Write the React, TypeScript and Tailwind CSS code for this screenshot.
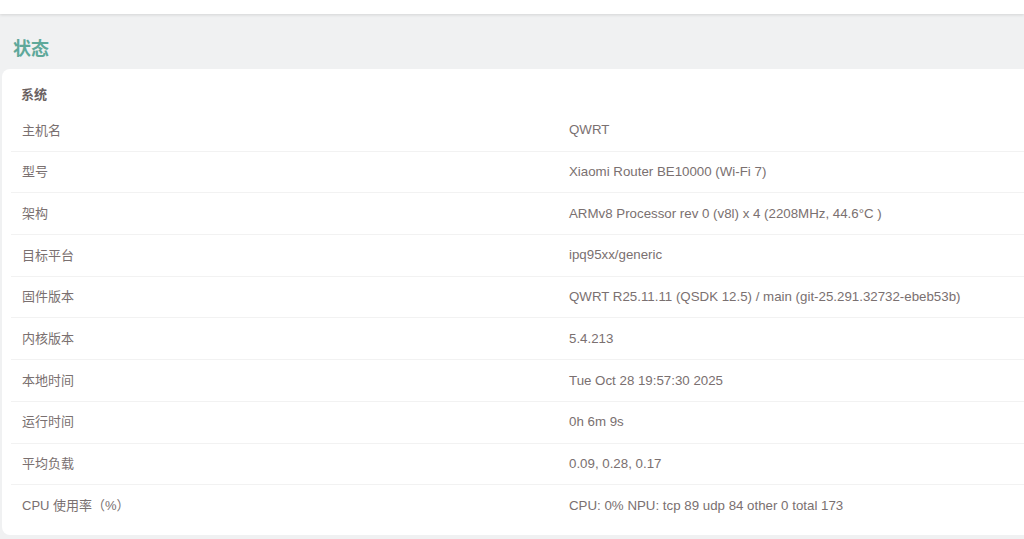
import React from 'react';

const rows: [string, string][] = [
  ['主机名', 'QWRT'],
  ['型号', 'Xiaomi Router BE10000 (Wi-Fi 7)'],
  ['架构', 'ARMv8 Processor rev 0 (v8l) x 4 (2208MHz, 44.6°C )'],
  ['目标平台', 'ipq95xx/generic'],
  ['固件版本', 'QWRT R25.11.11 (QSDK 12.5) / main (git-25.291.32732-ebeb53b)'],
  ['内核版本', '5.4.213'],
  ['本地时间', 'Tue Oct 28 19:57:30 2025'],
  ['运行时间', '0h 6m 9s'],
  ['平均负载', '0.09, 0.28, 0.17'],
  ['CPU 使用率（%）', 'CPU: 0% NPU: tcp 89 udp 84 other 0 total 173'],
];

export default function App() {
  return (
    <div
      className="h-[539px] w-[1024px] overflow-hidden bg-[#f0f1f2] text-[13px] text-[#7a7070]"
      style={{ fontFamily: '"Liberation Sans", "Noto Sans CJK SC", sans-serif' }}
    >
      {/* Header */}
      <div className="h-[14px] bg-white shadow-[0_1px_3px_rgba(0,0,0,0.12)]" />

      <h2 className="pl-[13px] pt-[23px] text-[18px] font-bold leading-[24px] text-[#5ea89a]">状态</h2>

      <div className="ml-[2px] mt-[8px] w-[1060px] rounded-[8px] bg-white px-[9px] pb-[8px] pt-[15px]">
        <h3 className="pl-[10px] text-[13px] font-bold leading-[22px] text-[#6b6262]">系统</h3>
        <div className="mt-[4px]">
          {rows.map(([k, v], i) => (
            <div
              key={k}
              className={`flex h-[41.7px] items-center ${i < rows.length - 1 ? 'border-b border-[#f2f2f2]' : ''}`}
            >
              <div className="w-[558px] shrink-0 pl-[11px]">{k}</div>
              <div className="text-[13.3px]">{v}</div>
            </div>
          ))}
        </div>
      </div>
    </div>
  );
}
